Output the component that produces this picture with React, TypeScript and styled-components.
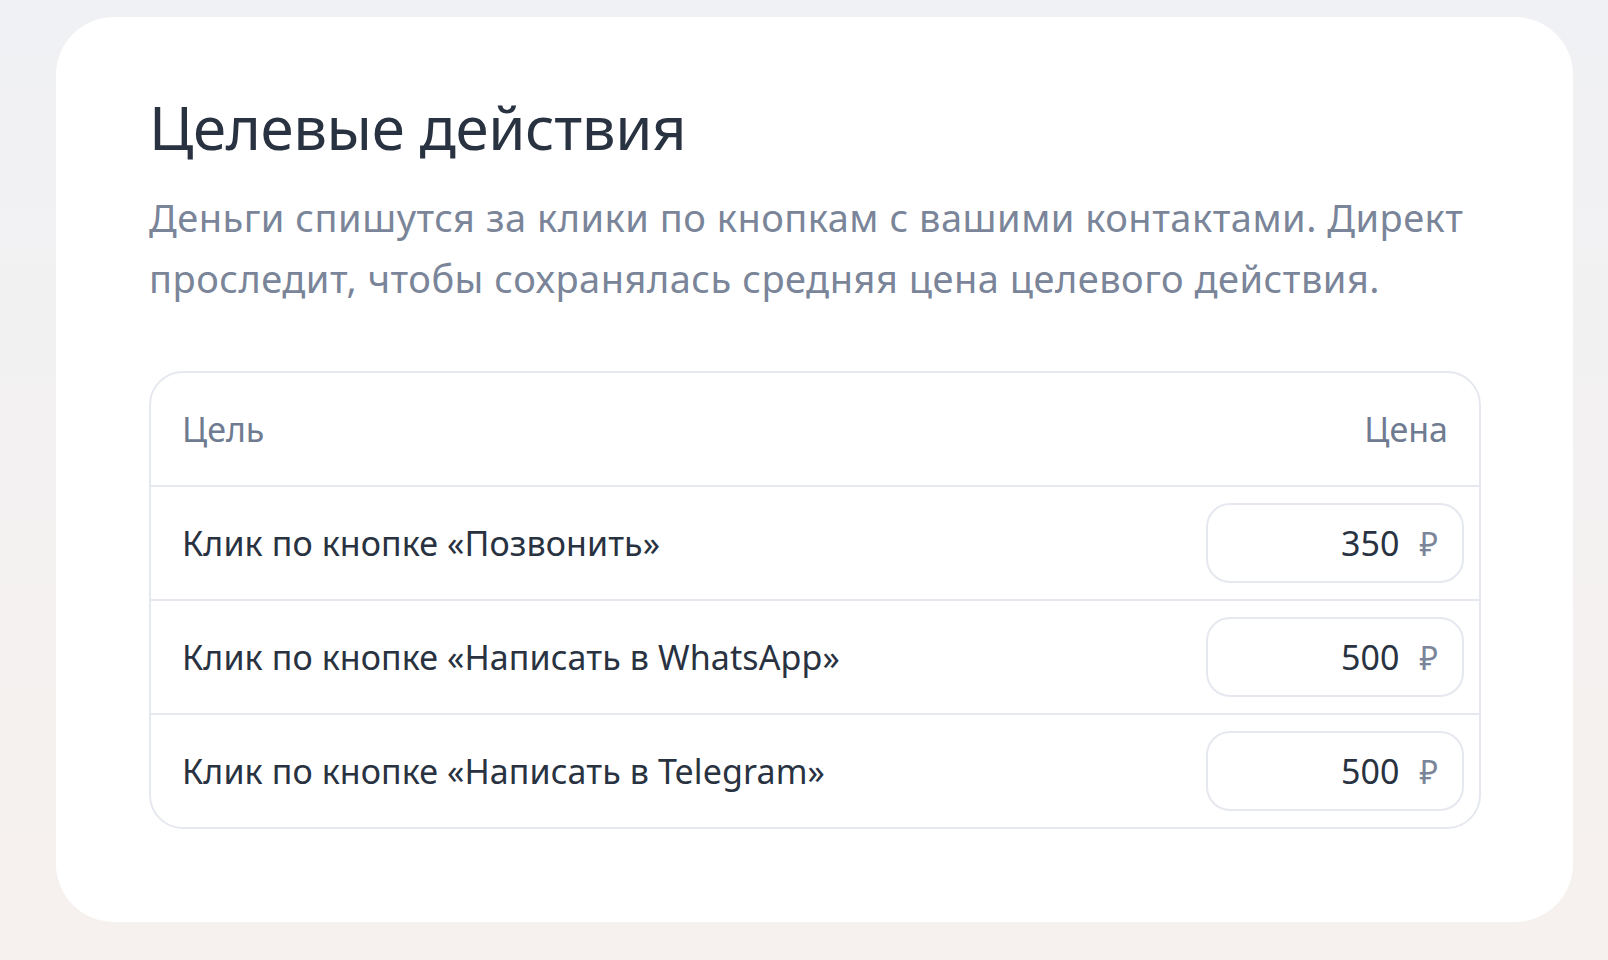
import React from "react";
import styled, { createGlobalStyle } from "styled-components";

const goals = [
  { title: "Клик по кнопке «Позвонить»", price: 350 },
  { title: "Клик по кнопке «Написать в WhatsApp»", price: 500 },
  { title: "Клик по кнопке «Написать в Telegram»", price: 500 },
];

export default function App() {
  return (
    <>
      <Global />
      <S.Page>
        <S.Card>
          <S.Title>Целевые действия</S.Title>
          <S.Lead>
            Деньги спишутся за клики по кнопкам с вашими контактами. Директ
            проследит, чтобы сохранялась средняя цена целевого действия.
          </S.Lead>
          <S.Table>
            <S.HeadRow>
              <S.HeadCell>Цель</S.HeadCell>
              <S.HeadCell>Цена</S.HeadCell>
            </S.HeadRow>
            {goals.map((g) => (
              <S.Row key={g.title}>
                <S.GoalName>{g.title}</S.GoalName>
                <S.PriceField>
                  <S.Value>{g.price}</S.Value>
                  <S.Currency>₽</S.Currency>
                </S.PriceField>
              </S.Row>
            ))}
          </S.Table>
        </S.Card>
      </S.Page>
    </>
  );
}

const Global = createGlobalStyle`
  html, body {
    margin: 0;
    padding: 0;
  }
  body {
    font-family: "Noto Sans", "Open Sans", sans-serif;
    background: linear-gradient(180deg, #f0f1f4 0%, #f6f1ee 100%);
    min-height: 960px;
  }
`;

const S = {
  Page: styled.div`
    padding: 17px 35px 38px 56px;
  `,
  Card: styled.section`
    background: #ffffff;
    border-radius: 58px;
    padding: 72px 92px 93px 93px;
  `,
  Title: styled.h1`
    margin: 0;
    color: #293241;
    font-size: 60px;
    line-height: 76px;
    font-weight: 400;
    letter-spacing: -0.4px;
  `,
  Lead: styled.p`
    margin: 22px 0 0;
    color: #7a8599;
    font-size: 38px;
    line-height: 61px;
    font-weight: 400;
    letter-spacing: 0.5px;
  `,
  Table: styled.div`
    margin-top: 62px;
    border: 2px solid #e6e8ef;
    border-radius: 34px;
    overflow: hidden;
  `,
  HeadRow: styled.div`
    display: flex;
    justify-content: space-between;
    align-items: center;
    height: 112px;
    padding: 0 31px;
    border-bottom: 2px solid #e6e8ef;
  `,
  HeadCell: styled.span`
    color: #6f7b91;
    font-size: 34px;
  `,
  Row: styled.div`
    display: flex;
    justify-content: space-between;
    align-items: center;
    height: 112px;
    padding: 0 15px 0 31px;
    & + & {
      border-top: 2px solid #e6e8ef;
    }
  `,
  GoalName: styled.span`
    color: #293241;
    font-size: 34px;
    letter-spacing: 0.1px;
  `,
  PriceField: styled.div`
    box-sizing: border-box;
    width: 258px;
    height: 80px;
    display: flex;
    align-items: center;
    justify-content: flex-end;
    gap: 20px;
    padding: 0 24px;
    border: 2px solid #e6e8ef;
    border-radius: 24px;
  `,
  Value: styled.span`
    color: #293241;
    font-size: 34px;
  `,
  Currency: styled.span`
    color: #7a8599;
    font-size: 32px;
  `,
};
